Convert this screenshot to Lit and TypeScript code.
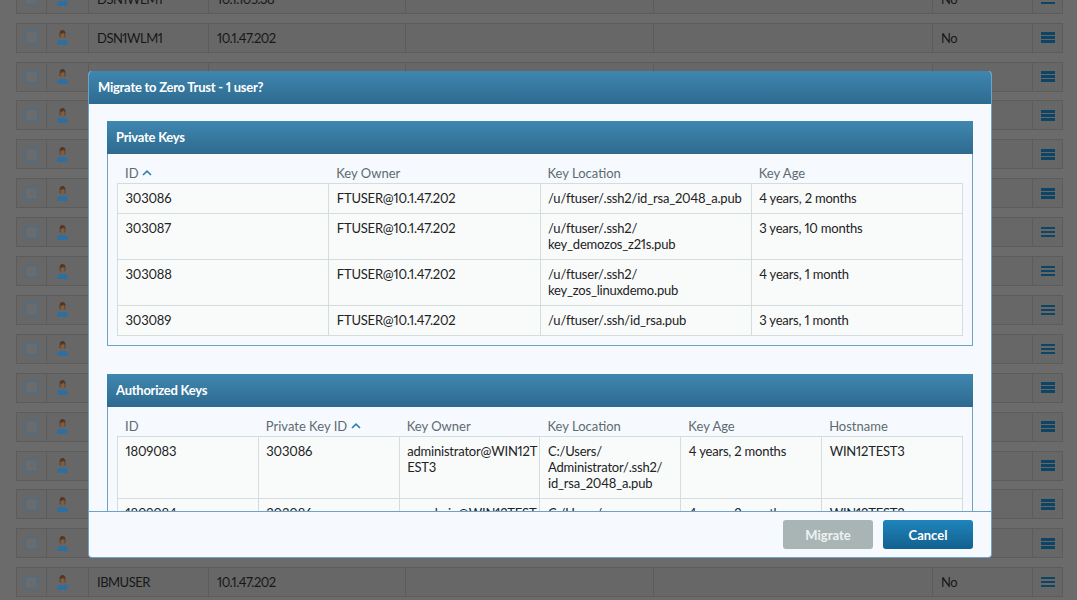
import { LitElement, html, css, svg } from "lit";
import { customElement } from "lit/decorators.js";

const personIcon = html`<svg class="person" viewBox="0 0 11 15" width="11" height="15">
  ${svg`<path d="M0.3 15 V12 C0.3 10.6 2 10 3.6 9.4 L5.5 10.4 L7.4 9.4 C9 10 10.7 10.6 10.7 12 V15 Z" fill="#2f6f9f"/>
  <path d="M2.6 4.6 C2.2 1.4 3.8 0.1 5.5 0.1 C7.2 0.1 8.8 1.4 8.4 4.6 L8.2 7.2 H2.8 Z" fill="#553622"/>
  <path d="M3.4 3.8 C4.6 4 6 3.4 6.6 2.7 C7 3.4 7.3 3.8 7.7 4 C7.9 6.6 6.8 9 5.5 9 C4.2 9 3.2 6.6 3.4 3.8 Z" fill="#7d5e46"/>`}
</svg>`;

const chevron = html`<svg class="chev" viewBox="0 0 10 6" width="10" height="6">
  ${svg`<path d="M1 5 L5 1.2 L9 5" fill="none" stroke="#2f7fb0" stroke-width="1.6"/>`}
</svg>`;

type Row = { name?: string; ip?: string; flag?: string };

const bgRows: Row[] = [
  { name: "DSN1WLM1", ip: "10.1.105.38", flag: "No" },
  { name: "DSN1WLM1", ip: "10.1.47.202", flag: "No" },
  ...Array.from({ length: 13 }, () => ({})),
  { name: "IBMUSER", ip: "10.1.47.202", flag: "No" },
];

const privateKeys = [
  ["303086", "FTUSER@10.1.47.202", "/u/ftuser/.ssh2/id_rsa_2048_a.pub", "4 years, 2 months"],
  ["303087", "FTUSER@10.1.47.202", "/u/ftuser/.ssh2/ key_demozos_z21s.pub", "3 years, 10 months"],
  ["303088", "FTUSER@10.1.47.202", "/u/ftuser/.ssh2/ key_zos_linuxdemo.pub", "4 years, 1 month"],
  ["303089", "FTUSER@10.1.47.202", "/u/ftuser/.ssh/id_rsa.pub", "3 years, 1 month"],
];

const authorizedKeys = [
  ["1809083", "303086", "administrator@WIN12TEST3", "C:/Users/ Administrator/.ssh2/ id_rsa_2048_a.pub", "4 years, 2 months", "WIN12TEST3"],
  ["1809084", "303086", "sysadmin@WIN12TEST3", "C:/Users/", "4 years, 2 months", "WIN12TEST3"],
];

@customElement("app-root")
export class AppRoot extends LitElement {
  // the page behind the dialog is drawn in its dimmed colours directly
  static styles = css`
    :host {
      display: block;
      position: relative;
      height: 600px;
      overflow: hidden;
      background: #6b6b6b;
      font-family: Lato, "Liberation Sans", sans-serif;
      font-size: 13px;
      font-variant-numeric: proportional-nums;
      color: #222;
    }

    .list {
      display: flex;
      flex-direction: column;
      gap: 8.9px;
      margin: -16.2px 14px 0 16px;
    }
    .row {
      display: grid;
      grid-template-columns: 29px 42px 120px 197px 248px 279px 100px 30px;
      height: 30px;
      box-sizing: border-box;
      border: 1px solid #5c5c5c;
      background: #676767;
      color: #171717;
      letter-spacing: -0.5px;
    }
    .row > div {
      display: flex;
      align-items: center;
      border-left: 1px solid #5c5c5c;
      padding-left: 8px;
      box-sizing: border-box;
      white-space: nowrap;
    }
    .row > div:first-child {
      border-left: 0;
    }
    .row > .person-cell {
      padding-left: 9.5px;
    }
    .check {
      width: 13px;
      height: 13px;
      box-sizing: border-box;
      border: 1.5px solid #3f6f96;
      border-radius: 3px;
      background: #6b6b6b;
    }
    .menu {
      display: flex;
      flex-direction: column;
      gap: 1.5px;
      width: 14px;
    }
    .menu i {
      display: block;
      height: 2.5px;
      background: #0e4464;
    }

    .modal {
      position: absolute;
      left: 88px;
      top: 71px;
      width: 904px;
      height: 487px;
      display: flex;
      flex-direction: column;
      box-sizing: border-box;
      background: #f6fafe;
      border: 1px solid #6ea3c8;
      border-top: 0;
      border-radius: 4px;
      overflow: hidden;
    }
    .modal-title,
    .panel-title {
      flex: none;
      display: flex;
      align-items: center;
      box-sizing: border-box;
      height: 33px;
      padding: 0 0 1px 9px;
      color: #fff;
      font-weight: 700;
      font-size: 13px;
      letter-spacing: -0.25px;
      background: linear-gradient(#3f87b0, #2e6a90);
    }
    .modal-body {
      flex: 1;
      min-height: 0;
      overflow: hidden;
      padding: 17px 18px 0;
      display: flex;
      flex-direction: column;
      gap: 28px;
    }
    .panel {
      flex: none;
      border: 1px solid #6ea3c8;
      border-top: 0;
    }
    .panel-title {
      margin: 0 -1px;
    }
    .panel-body {
      padding: 0 9px 9px;
    }
    table {
      width: 100%;
      table-layout: fixed;
      border-collapse: collapse;
      line-height: 16px;
    }
    th {
      text-align: left;
      font-weight: 400;
      color: #5e6a70;
      padding: 11px 8px 2px 7.5px;
      white-space: nowrap;
    }
    .chev {
      vertical-align: 2px;
    }
    td {
      border: 1px solid #d3dcdf;
      background: #f9fbfb;
      padding: 6px 0 7px 7.5px;
      vertical-align: top;
      overflow-wrap: anywhere;
      color: #222;
      letter-spacing: -0.2px;
    }
    .modal-foot {
      flex: none;
      height: 46px;
      box-sizing: border-box;
      border-top: 1px solid #6ea3c8;
      padding: 8px 18px 0;
      display: flex;
      justify-content: flex-end;
      gap: 10px;
    }
    .btn {
      width: 90px;
      height: 29px;
      display: flex;
      align-items: center;
      justify-content: center;
      border-radius: 3px;
      color: #fff;
      font-weight: 700;
    }
    .btn.off {
      background: #a9b5b4;
      color: #eef2f2;
    }
    .btn.on {
      background: linear-gradient(#1f85bb, #12608f);
    }
  `;

  private renderRow(r: Row) {
    return html`<div class="row">
      <div><span class="check"></span></div>
      <div class="person-cell">${personIcon}</div>
      <div>${r.name ?? ""}</div>
      <div>${r.ip ?? ""}</div>
      <div></div>
      <div></div>
      <div>${r.flag ?? ""}</div>
      <div><span class="menu"><i></i><i></i><i></i></span></div>
    </div>`;
  }

  render() {
    return html`
      <div class="list">${bgRows.map((r) => this.renderRow(r))}</div>
      <div class="modal">
        <div class="modal-title">Migrate to Zero Trust - 1 user?</div>
        <div class="modal-body">
          <section class="panel">
            <div class="panel-title">Private Keys</div>
            <div class="panel-body">
              <table>
                <thead>
                  <tr>
                    <th>ID ${chevron}</th>
                    <th>Key Owner</th>
                    <th>Key Location</th>
                    <th>Key Age</th>
                  </tr>
                </thead>
                <tbody>
                  ${privateKeys.map((row) => html`<tr>${row.map((c) => html`<td>${c}</td>`)}</tr>`)}
                </tbody>
              </table>
            </div>
          </section>
          <section class="panel">
            <div class="panel-title">Authorized Keys</div>
            <div class="panel-body">
              <table>
                <thead>
                  <tr>
                    <th>ID</th>
                    <th>Private Key ID ${chevron}</th>
                    <th>Key Owner</th>
                    <th>Key Location</th>
                    <th>Key Age</th>
                    <th>Hostname</th>
                  </tr>
                </thead>
                <tbody>
                  ${authorizedKeys.map((row) => html`<tr>${row.map((c) => html`<td>${c}</td>`)}</tr>`)}
                </tbody>
              </table>
            </div>
          </section>
        </div>
        <div class="modal-foot">
          <div class="btn off">Migrate</div>
          <div class="btn on">Cancel</div>
        </div>
      </div>
    `;
  }
}
